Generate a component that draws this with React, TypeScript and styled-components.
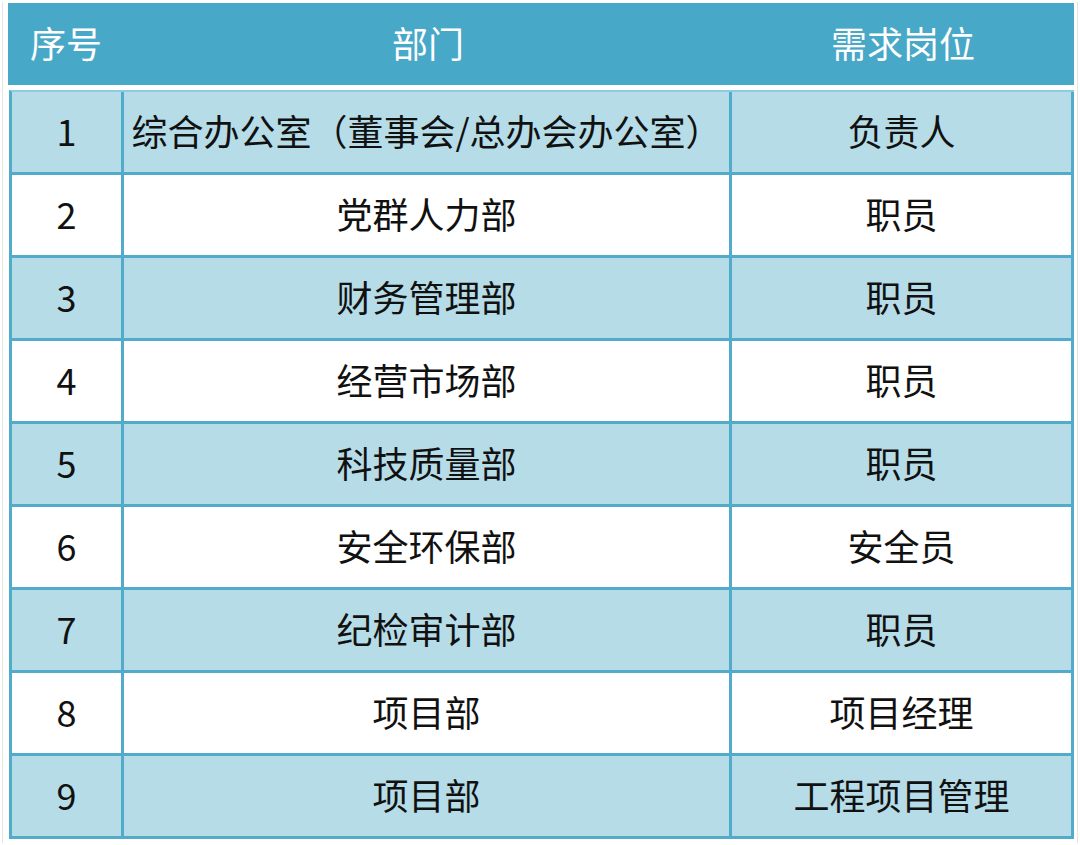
import React from "react";
import styled, { createGlobalStyle } from "styled-components";

const GlobalStyle = createGlobalStyle`
	html, body {
		margin: 0;
		padding: 0;
		background: #ffffff;
	}
	* {
		box-sizing: border-box;
	}
`;

const Page = styled.div`
	width: 1080px;
	height: 845px;
	padding: 2px;
	font-family: "Noto Sans CJK SC", "Noto Sans", sans-serif;
`;

const Frame = styled.div`
	height: 100%;
	border-left: 1px solid #e4e4e4;
	border-right: 1px solid #e4e4e4;
	padding: 1px 3px 0 5px;
`;

const Header = styled.div`
	display: grid;
	grid-template-columns: 116px 608px 1fr;
	height: 82px;
	background: #48a8c7;
	color: #ffffff;
	margin-bottom: 5px;
`;

const HeadCell = styled.div`
	display: flex;
	align-items: center;
	justify-content: center;
	font-size: 36px;
	padding-bottom: 4px;
`;

const Body = styled.div`
	margin-left: 1px;
	border-left: 3px solid #52abcb;
	border-top: 2px solid #8ccbe0;
`;

const Row = styled.div<{ $shade: boolean }>`
	display: grid;
	grid-template-columns: 112px 608px 1fr;
	height: 83px;
	background: ${(p) => (p.$shade ? "#b6dce8" : "#ffffff")};
`;

const Cell = styled.div`
	display: flex;
	align-items: center;
	justify-content: center;
	border-right: 3px solid #52abcb;
	border-bottom: 3px solid #52abcb;
	font-size: 36px;
	color: #111111;
	padding-bottom: 4px;
	white-space: nowrap;
`;

const rows: [string, string][] = [
	["综合办公室（董事会/总办会办公室）", "负责人"],
	["党群人力部", "职员"],
	["财务管理部", "职员"],
	["经营市场部", "职员"],
	["科技质量部", "职员"],
	["安全环保部", "安全员"],
	["纪检审计部", "职员"],
	["项目部", "项目经理"],
	["项目部", "工程项目管理"],
];

export default function App() {
	return (
		<Page>
			<GlobalStyle />
			<Frame>
				<Header>
					<HeadCell>序号</HeadCell>
					<HeadCell>部门</HeadCell>
					<HeadCell>需求岗位</HeadCell>
				</Header>
				<Body>
					{rows.map(([dept, post], i) => (
						<Row key={i} $shade={i % 2 === 0}>
							<Cell>{i + 1}</Cell>
							<Cell>{dept}</Cell>
							<Cell>{post}</Cell>
						</Row>
					))}
				</Body>
			</Frame>
		</Page>
	);
}
